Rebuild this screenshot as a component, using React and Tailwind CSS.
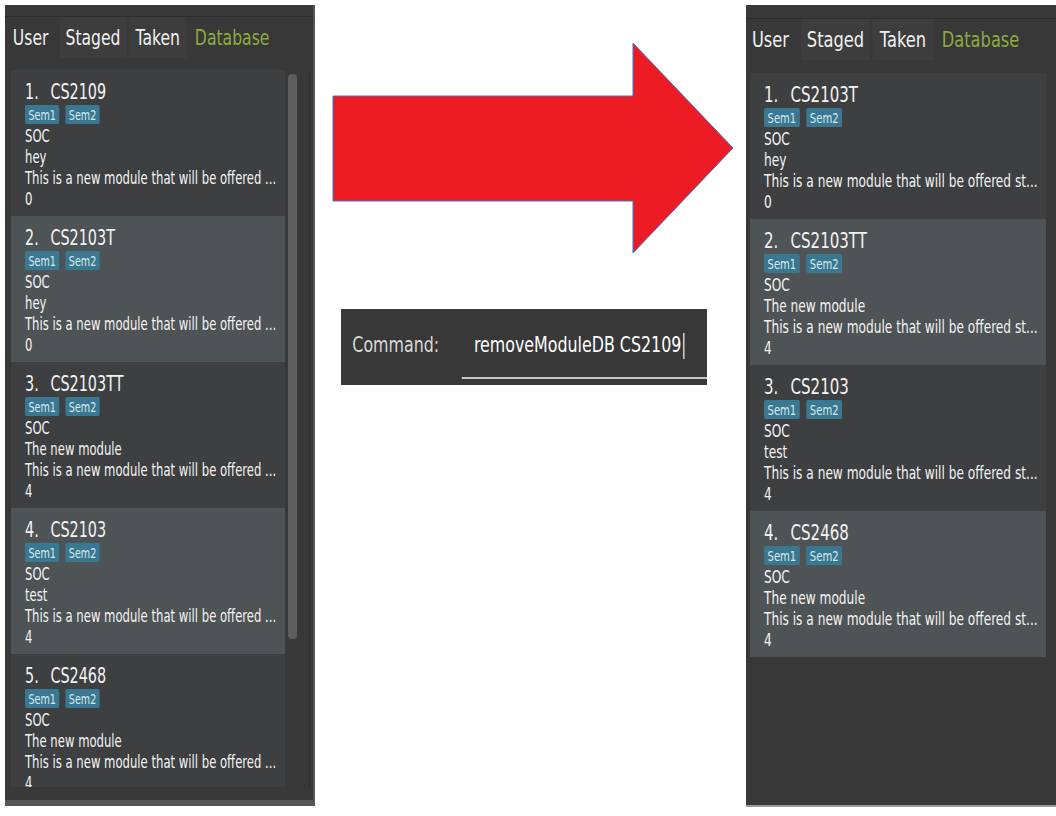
import React from "react";

const leftMods = [
  { code: "CS2109", dept: "SOC", name: "hey", credits: "0" },
  { code: "CS2103T", dept: "SOC", name: "hey", credits: "0" },
  { code: "CS2103TT", dept: "SOC", name: "The new module", credits: "4" },
  { code: "CS2103", dept: "SOC", name: "test", credits: "4" },
  { code: "CS2468", dept: "SOC", name: "The new module", credits: "4" },
];

const rightMods = [
  { code: "CS2103T", dept: "SOC", name: "hey", credits: "0" },
  { code: "CS2103TT", dept: "SOC", name: "The new module", credits: "4" },
  { code: "CS2103", dept: "SOC", name: "test", credits: "4" },
  { code: "CS2468", dept: "SOC", name: "The new module", credits: "4" },
];

// the screenshot is squeezed sideways, so text rows get a horizontal scale
function Tabs({ first, squeeze }) {
  return (
    <div className="h-[41px] flex">
      <div className={`flex items-stretch origin-left ${squeeze} text-[22px] leading-none whitespace-nowrap`}>
        <div className={`flex items-center ${first} pr-[16px] text-[#f0f0f0]`}>User</div>
        <div className="flex items-center px-[8px] bg-[#3d3d3d] text-[#f0f0f0]">Staged</div>
        <div className="flex items-center px-[10px] ml-[3px] bg-[#3d3d3d] text-[#f0f0f0]">Taken</div>
        <div className="flex items-center pl-[11px] text-[#8cab3e]">Database</div>
      </div>
    </div>
  );
}

function ModuleCard({ index, mod, desc, squeeze }) {
  const shade = index % 2 === 1 ? "bg-[#3d3f41]" : "bg-[#4e5356]";
  return (
    <div className={`${shade} pl-[14px] pt-[6px] pb-[6px] shrink-0 h-[146px] text-[#f4f4f4] overflow-hidden`}>
      <div className={`origin-left ${squeeze} whitespace-nowrap`}>
        <div className="flex h-[28px] pt-[4px] items-center text-[21px] leading-none">
          <span>{index}.</span>
          <span className="ml-[17px]">{mod.code}</span>
        </div>
        <div className="flex gap-[9px] mt-[1px] mb-[2px]">
          <span className="h-[19px] px-[5px] flex items-center rounded-[2px] bg-[#3a7891] text-[#d6e9ef] text-[14px] leading-none">Sem1</span>
          <span className="h-[19px] px-[5px] flex items-center rounded-[2px] bg-[#3a7891] text-[#d6e9ef] text-[14px] leading-none">Sem2</span>
        </div>
        <div className="text-[17px] leading-[21px]">
          <div>{mod.dept}</div>
          <div>{mod.name}</div>
          <div>{desc}</div>
          <div>{mod.credits}</div>
        </div>
      </div>
    </div>
  );
}

function ArrowGraphic() {
  return (
    <svg width="402" height="212" viewBox="-1 -1 402 212" className="block">
      <polygon
        points="0,53 300,53 300,0 400,105 300,210 300,158 0,158"
        fill="#ed1c24"
        stroke="#4472c4"
        strokeWidth="1"
      />
    </svg>
  );
}

export default function App() {
  return (
    <div className="w-[1056px] h-[816px] bg-white flex pt-[5px] pl-[5px] overflow-hidden font-[family-name:'DejaVu_Sans',sans-serif]">
      {/* before */}
      <div className="w-[310px] h-[801px] bg-[#383838] flex flex-col border-r-[2px] border-b-[6px] border-[#555555]">
        <div className="h-[12px] bg-[#383838] border-b border-[#2c2c2c]" />
        <Tabs first="pl-[11px]" squeeze="scale-x-[0.71]" />
        <div className="flex flex-1 min-h-0 pt-[12px] pl-[6px] pb-[13px]">
          <div className="w-[274px] flex flex-col overflow-hidden">
            {leftMods.map((m, i) => (
              <ModuleCard
                key={m.code}
                index={i + 1}
                mod={m}
                squeeze="scale-x-[0.685]"
                desc="This is a new module that will be offered ..."
              />
            ))}
          </div>
          <div className="ml-[3px] mt-[4px] w-[9px] h-[565px] rounded-[4px] bg-[#5e5e5e]" />
          <div className="ml-[12px] w-px bg-[#2e2e2e]" />
        </div>
      </div>

      {/* command */}
      <div className="w-[431px] flex flex-col">
        <div className="ml-[17px] mt-[37px]">
          <ArrowGraphic />
        </div>
        <div className="ml-[26px] mt-[55px] w-[366px] h-[76px] bg-[#383838] overflow-hidden">
          <div className="w-[485px] h-full flex items-start origin-left scale-x-[0.755] whitespace-nowrap">
            <span className="ml-[15px] mt-[24px] text-[21px] leading-[24px] text-[#d8d8d8]">Command:</span>
            <div className="ml-auto w-[325px] mt-[13px] h-[57px] pb-[8px] border-b-[2px] border-[#c8c8c8] flex items-center pl-[16px] text-[21px] text-white">
              removeModuleDB CS2109
              <span className="ml-[2px] w-[2px] h-[26px] bg-[#d0d0d0]" />
            </div>
          </div>
        </div>
      </div>

      {/* after */}
      <div className="w-[310px] h-[802px] bg-[#383838] flex flex-col border-b-[2px] border-[#9a9a9a]">
        <div className="h-[14px] bg-[#383838] border-b border-[#2c2c2c]" />
        <Tabs first="pl-[8px]" squeeze="scale-x-[0.74]" />
        <div className="flex flex-col pt-[13px] pl-[4px] pr-[10px]">
          {rightMods.map((m, i) => (
            <ModuleCard
              key={m.code}
              index={i + 1}
              mod={m}
              squeeze="scale-x-[0.716]"
              desc="This is a new module that will be offered st..."
            />
          ))}
        </div>
      </div>
    </div>
  );
}
